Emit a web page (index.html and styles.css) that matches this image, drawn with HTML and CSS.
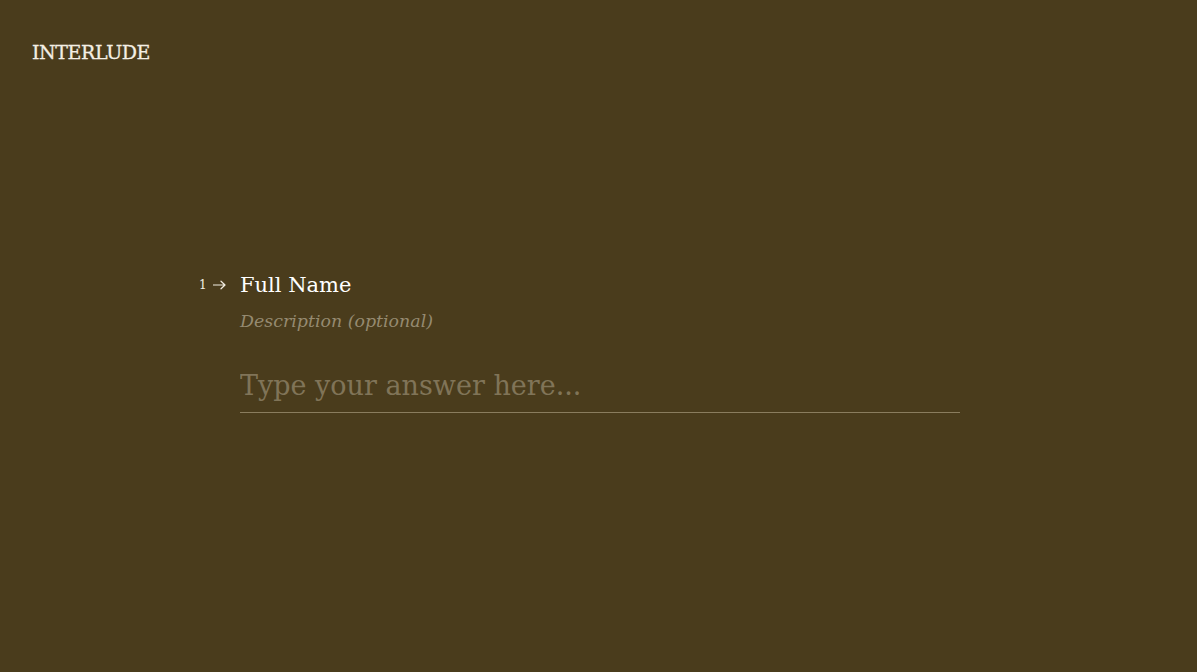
FILE: index.html
```html
<!DOCTYPE html>
<html lang="en">
<head>
<meta charset="utf-8">
<title>Interlude</title>
<link rel="stylesheet" href="styles.css">
</head>
<body>
<header class="topbar">
  <div class="brand">INTERLUDE</div>
</header>
<main class="stage">
  <section class="question">
    <div class="q-head">
      <span class="q-num">1<svg class="q-arrow" width="13" height="10" viewBox="0 0 13 10" aria-hidden="true"><path d="M0.5 5H12M8 1.2L12 5L8 8.8" fill="none" stroke="#f2ede2" stroke-width="1.2" stroke-linecap="round" stroke-linejoin="round"/></svg></span>
      <h1 class="q-title">Full Name</h1>
    </div>
    <p class="q-desc">Description (optional)</p>
    <input class="q-input" type="text" placeholder="Type your answer here...">
  </section>
</main>
</body>
</html>
```

FILE: styles.css
```css
* { box-sizing: border-box; }
html, body { margin: 0; padding: 0; }
body {
  background: #4a3c1c;
  color: #f2ede2;
  font-family: "DejaVu Serif", "Liberation Serif", serif;
  height: 672px;
  overflow: hidden;
}
.topbar {
  padding: 40px 32px 0;
}
.brand {
  font-size: 19px;
  letter-spacing: -0.4px;
  line-height: 24px;
  color: #f4efe4;
  -webkit-text-stroke: 0.3px #f4efe4;
}
.stage {
  display: flex;
  justify-content: center;
  padding-top: 206px;
}
.question {
  width: 720px;
  margin-left: 3px;
}
.q-head {
  display: flex;
  align-items: center;
}
.q-num {
  width: 42px;
  margin-left: -42px;
  padding-left: 1px;
  font-size: 12px;
  display: flex;
  align-items: center;
  gap: 6px;
  color: #f2ede2;
}
.q-arrow {
  display: block;
  margin-top: 1px;
}
.q-title {
  margin: 1px 0 0;
  font-weight: normal;
  font-size: 21px;
  line-height: 28px;
  color: #ffffff;
}
.q-desc {
  margin: 10px 0 0;
  font-style: italic;
  font-size: 17.4px;
  line-height: 24px;
  color: #958a70;
}
.q-input {
  display: block;
  width: 720px;
  margin-top: 35px;
  background: transparent;
  border: none;
  border-bottom: 1px solid #8a7d5e;
  padding: 0 0 8px;
  font-family: inherit;
  font-size: 27px;
  line-height: 36px;
  color: #f2ede2;
  outline: none;
}
.q-input::placeholder { color: #807458; }
```
